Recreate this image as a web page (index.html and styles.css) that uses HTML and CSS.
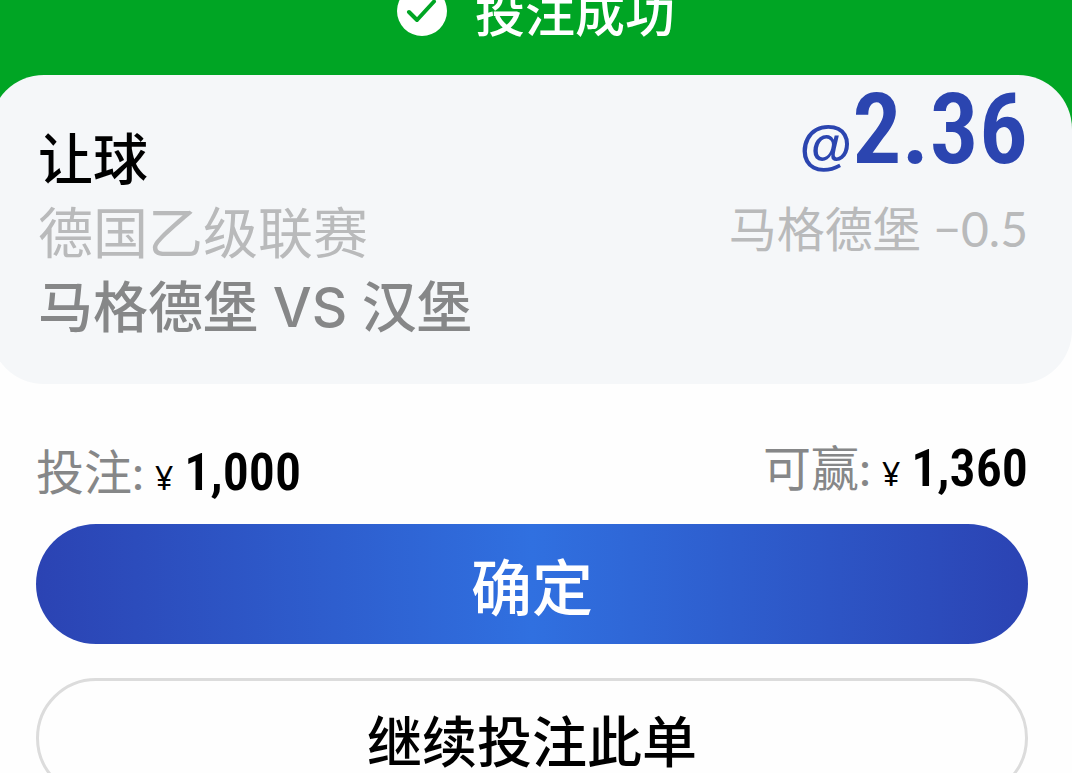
FILE: index.html
```
<!DOCTYPE html>
<html lang="zh-CN">
<head>
    <meta charset="UTF-8">
    <meta name="viewport" content="width=device-width, initial-scale=1.0">
    <title>投注成功</title>
    <link rel="stylesheet" href="styles.css">
</head>
<body>
    <header class="status">
        <svg class="status-icon" viewBox="0 0 50 56" aria-hidden="true">
            <circle cx="25" cy="25" r="25" fill="#fff"/>
            <path d="M12 26 L20 34 L37 15.500" fill="none" stroke="#00a524" stroke-width="4" stroke-linecap="round" stroke-linejoin="round"/>
        </svg>
        <h1 class="status-title">投注成功</h1>
    </header>

    <main>
        <section class="bet-card">
            <div class="bet-info">
                <h2 class="bet-type">让球</h2>
                <p class="league">德国乙级联赛</p>
                <p class="match">马格德堡 VS 汉堡</p>
            </div>
            <div class="bet-odds">
                <p class="odds"><span class="at">@</span>2.36</p>
                <p class="pick">马格德堡 −0.5</p>
            </div>
        </section>

        <section class="amounts">
            <p class="amount stake"><span class="label">投注:</span><span class="currency">¥</span><span class="value">1,000</span></p>
            <p class="amount"><span class="label">可赢:</span><span class="currency">¥</span><span class="value">1,360</span></p>
        </section>

        <div class="actions">
            <button type="button" class="button confirm">确定</button>
            <button type="button" class="button again">继续投注此单</button>
        </div>
    </main>
</body>
</html>
```
FILE: styles.css
```
* {
    box-sizing: border-box;
}
body {
    margin: 0;
    background-color: #fefefe;
    color: #000;
    font-family: Lato, "Noto Sans CJK SC", sans-serif;
    overflow: hidden;
}
h1, h2, p {
    margin: 0;
    font-size: inherit;
    font-weight: 400;
}
.status {
    display: flex;
    justify-content: center;
    height: 180px;
    background-color: #00a524;
    color: #fff;
}
.status-icon {
    width: 50px;
    height: 56px;
    margin: -14px 28px 0 0;
}
.status-title {
    font-size: 50px;
    font-weight: 500;
    line-height: 26px;
}

/* Bet summary */
.bet-card {
    display: flex;
    justify-content: space-between;
    margin: -105px 0 0 -10px;
    padding: 0 44px 40px 48px;
    background-color: #f5f7f9;
    border-radius: 54px;
}
.bet-info {
    padding-top: 47px;
    font-family: Inter, "Noto Sans CJK SC", sans-serif;
    font-size: 55px;
    line-height: 74px;
}
.bet-type, .match {
    font-weight: 500;
}
.league {
    color: #b9babb;
}
.match {
    color: #868788;
}
.bet-odds {
    text-align: right;
}
.odds {
    color: #2b45b0;
    font-family: "Roboto Condensed", "Liberation Sans", sans-serif;
    font-size: 98px;
    font-weight: 600;
    line-height: 110px;
}
.at {
    font-family: "Liberation Sans", sans-serif;
    font-size: 54px;
}
.pick {
    color: #b9babb;
    font-size: 48px;
    line-height: 60px;
}

/* Stake and winnings */
.amounts {
    display: flex;
    justify-content: space-between;
    align-items: flex-start;
    padding: 50px 44px 12px 36px;
}
.amount {
    display: flex;
    align-items: baseline;
    line-height: 68px;
}
.stake {
    padding-top: 4px;
}
.label {
    color: #868788;
    font-size: 48px;
}
.currency {
    margin: 0 11px;
    font-family: "Noto Sans", sans-serif;
    font-size: 32px;
}
.value {
    font-family: "Roboto Condensed", "Liberation Sans", sans-serif;
    font-size: 52px;
    font-weight: 600;
}

.actions {
    display: flex;
    flex-direction: column;
    gap: 34px;
    padding: 0 44px 34px 36px;
}
.button {
    height: 120px;
    padding: 0;
    border: none;
    border-radius: 60px;
    font-family: inherit;
    font-weight: 500;
    cursor: pointer;
}
.confirm {
    background: linear-gradient(90deg, #2b43b3, #3070e0 50%, #2b43b3);
    color: #fff;
    font-size: 61px;
}
.again {
    background-color: #fefefe;
    border: 3px solid #dcdcdc;
    color: #000;
    font-size: 55px;
}
```
